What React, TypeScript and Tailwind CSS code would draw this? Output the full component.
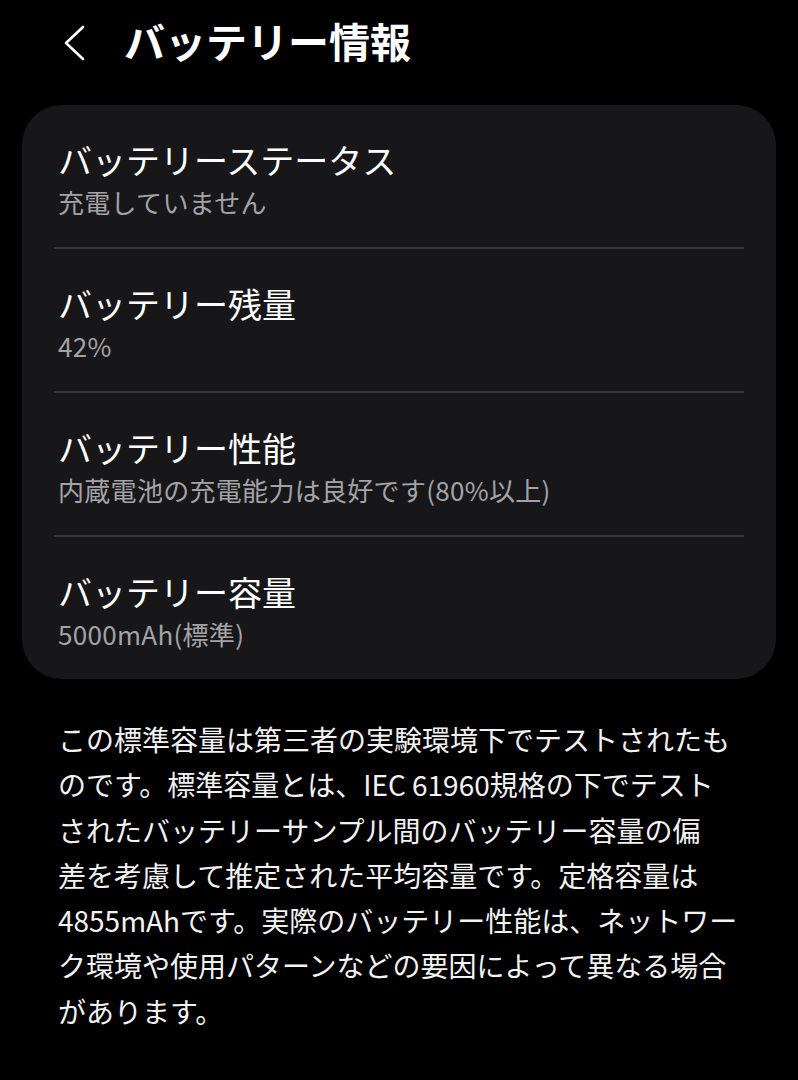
const rows = [
  { title: 'バッテリーステータス', value: '充電していません' },
  { title: 'バッテリー残量', value: '42%' },
  { title: 'バッテリー性能', value: '内蔵電池の充電能力は良好です(80%以上)' },
  { title: 'バッテリー容量', value: '5000mAh(標準)' },
]

const font = { fontFamily: '"Noto Sans CJK JP", "Noto Sans", sans-serif' }

export default function App() {
  return (
    <div className="min-h-[1080px] w-[798px] bg-black text-white" style={font}>
      {/* header */}
      <div className="flex h-[80px] items-center pl-[58px]">
        <svg width="32" height="40" viewBox="0 0 32 40" className="mt-[2px]">
          <path d="M25 6 L8 22 L25 38" fill="none" stroke="white" strokeWidth="2.6" strokeLinecap="round" strokeLinejoin="round" />
        </svg>
        <h1 className="ml-[34px] text-[41px] font-bold leading-none">バッテリー情報</h1>
      </div>

      {/* info card */}
      <div className="mx-[22px] mt-[25px] rounded-[40px] bg-[#17171a]">
        {rows.map((row, i) => (
          <div key={row.title}>
            {i > 0 && <div className="mx-[32px] h-[2px] bg-[#343437]" />}
            <div className="px-[36px] pb-[27px] pt-[33px]">
              <div className="text-[34px] leading-[44px]">{row.title}</div>
              <div className="mt-[2px] text-[26px] leading-[36px] tracking-[0.3px] text-[#a3a3a6]">{row.value}</div>
            </div>
          </div>
        ))}
      </div>

      {/* note */}
      <p className="mt-[38px] pl-[58px] pr-[20px] text-[28px] leading-[45.3px] text-[#f2f2f2]">
        この標準容量は第三者の実験環境下でテストされたも
        <br />
        のです。標準容量とは、IEC 61960規格の下でテスト
        <br />
        されたバッテリーサンプル間のバッテリー容量の偏
        <br />
        差を考慮して推定された平均容量です。定格容量は
        <br />
        4855mAhです。実際のバッテリー性能は、ネットワー
        <br />
        ク環境や使用パターンなどの要因によって異なる場合
        <br />
        があります。
      </p>
    </div>
  )
}
